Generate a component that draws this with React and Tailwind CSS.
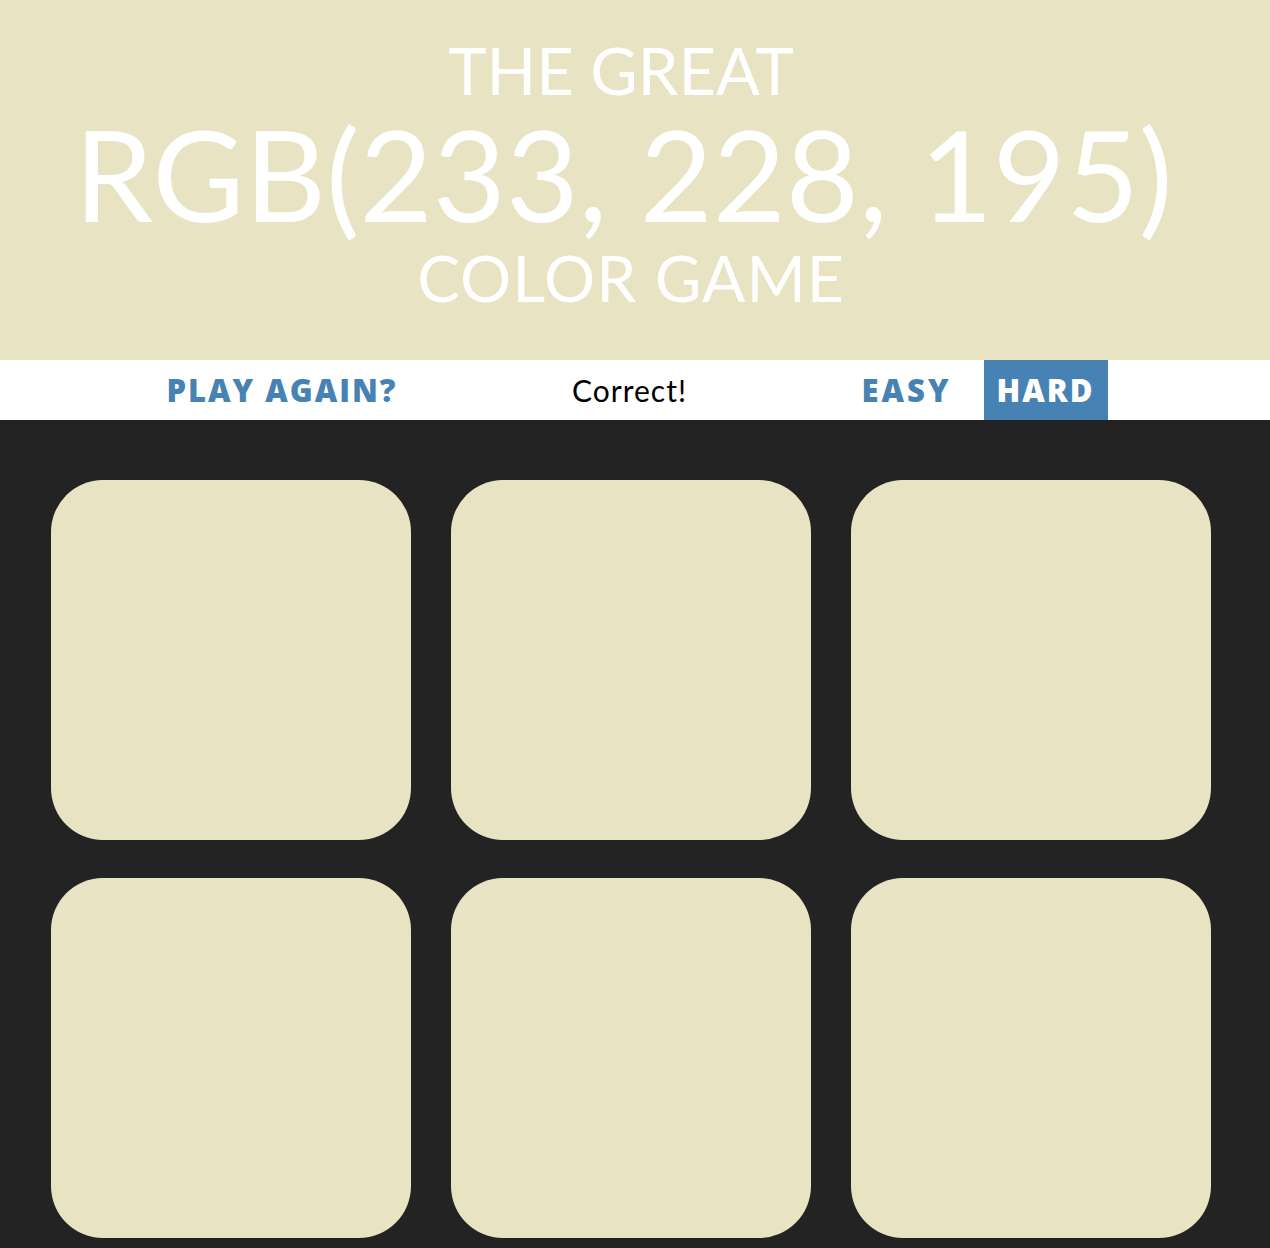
function Square() {
  return <div className="h-[360px] w-[360px] rounded-[52px] bg-[#e8e3c3]" />;
}

export default function App() {
  return (
    <div className="min-h-screen bg-[#232323] font-['Lato','Liberation_Sans',sans-serif]">
      <div className="flex h-[360px] flex-col items-center bg-[#e8e3c3] text-white font-normal">
        <div className="mt-[32px] h-[76px] pr-[28px] text-[65px] leading-[76px]">THE GREAT</div>
        <div className="h-[132px] pr-[23px] text-[126px] leading-[132px]">RGB(233, 228, 195)</div>
        <div className="h-[76px] pr-[8px] text-[64px] leading-[76px] tracking-[1px]">COLOR GAME</div>
      </div>

      <div className="flex h-[60px] items-center justify-center bg-white pr-[10px]">
        <button className="h-full px-[14px] font-['Open_Sans','Lato',sans-serif] text-[31px] font-extrabold tracking-[2px] text-[#4682b4]">
          PLAY AGAIN?
        </button>
        <span className="w-[436px] text-center text-[30px] tracking-[1px] text-black">Correct!</span>
        <button className="h-full px-[14px] font-['Open_Sans','Lato',sans-serif] text-[31px] font-extrabold tracking-[3px] text-[#4682b4]">
          EASY
        </button>
        <button className="ml-[18px] h-full w-[124px] bg-[#4682b4] font-['Open_Sans','Lato',sans-serif] text-[31px] font-extrabold tracking-[2px] text-white">
          HARD
        </button>
      </div>

      <div className="pl-[51px] pt-[60px] pb-[10px]">
        <div className="grid w-[1160px] grid-cols-3 gap-x-[40px] gap-y-[38px]">
          <Square />
          <Square />
          <Square />
          <Square />
          <Square />
          <Square />
        </div>
      </div>
    </div>
  );
}
